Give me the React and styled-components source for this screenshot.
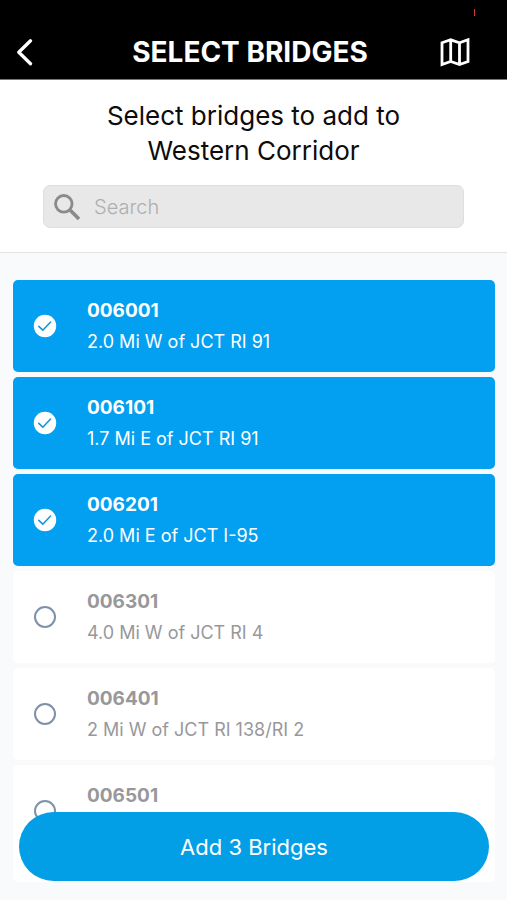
import React, { useState } from "react";
import styled, { createGlobalStyle } from "styled-components";

const BRIDGES = [
  { id: "006001", location: "2.0 Mi W of JCT RI 91" },
  { id: "006101", location: "1.7 Mi E of JCT RI 91" },
  { id: "006201", location: "2.0 Mi E of JCT I-95" },
  { id: "006301", location: "4.0 Mi W of JCT RI 4" },
  { id: "006401", location: "2 Mi W of JCT RI 138/RI 2" },
  { id: "006501", location: "" },
];

//styled-components
const GlobalStyle = createGlobalStyle`
  * {
    box-sizing: border-box;
  }
  body {
    margin: 0;
    background: #f8fafc;
    font-family: Inter, "Liberation Sans", sans-serif;
  }
`;
const Screen = styled.div`
  display: flex;
  flex-direction: column;
  height: 100vh;
`;
const Header = styled.header`
  background: #000;
  color: #fff;
  border-bottom: 1px solid #777;
`;
const StatusBar = styled.div`
  display: flex;
  justify-content: flex-end;
  align-items: flex-end;
  height: 16px;
  padding-right: 32px;
`;
const RecordingMark = styled.span`
  width: 1px;
  height: 7px;
  background: #d9363b;
`;
const NavBar = styled.div`
  display: flex;
  align-items: center;
  justify-content: space-between;
  height: 63px;
  padding: 8px 19px 0 12px;
`;
const Title = styled.h1`
  margin: 0;
  font-size: 28px;
  line-height: 32px;
  font-weight: 700;
`;
const IconButton = styled.button`
  display: flex;
  align-items: center;
  justify-content: flex-start;
  width: 48px;
  height: 40px;
  padding: 0;
  border: 0;
  background: none;
  color: inherit;
`;
const SearchPanel = styled.section`
  padding: 18px 43px 24px;
  background: #fff;
  border-bottom: 1px solid #e0e2e4;
`;
const Prompt = styled.h2`
  margin: 0 0 17px;
  text-align: center;
  color: #0c0c0c;
  font-size: 26px;
  line-height: 35px;
  font-weight: 400;
`;
const SearchBox = styled.label`
  display: flex;
  align-items: center;
  gap: 14px;
  height: 43px;
  padding: 0 10px;
  background: #e8e8e8;
  border: 1px solid #dedede;
  border-radius: 7px;
  color: #8a8a8d;
`;
const SearchInput = styled.input`
  flex: 1;
  min-width: 0;
  padding: 0;
  border: 0;
  outline: 0;
  background: none;
  color: #333;
  font-family: inherit;
  font-size: 20px;
  font-weight: 300;
  &::placeholder {
    color: #aeaeb0;
    opacity: 1;
  }
`;
const ListArea = styled.main`
  position: relative;
  display: flex;
  flex: 1;
  min-height: 0;
  margin-bottom: 18px;
  padding: 27px 12px 0 13px;
`;
const BridgeList = styled.ul`
  display: flex;
  flex: 1;
  flex-direction: column;
  gap: 5px;
  margin: 0;
  padding: 0;
  overflow: hidden;
  list-style: none;
`;
const BridgeItem = styled.li`
  display: flex;
  flex-shrink: 0;
  min-height: 92px;
  border-radius: 5px;
  background: ${(props) => (props.$selected ? "#039ff0" : "#fff")};
  color: ${(props) => (props.$selected ? "#fff" : "#98989b")};
  &:last-child {
    flex-grow: 1;
  }
`;
const BridgeLabel = styled.label`
  display: flex;
  flex: 1;
  align-items: flex-start;
  gap: 30px;
  padding: 15px 20px;
  cursor: pointer;
`;
const CheckWrap = styled.span`
  display: grid;
  width: 24px;
  height: 62px;
  place-items: center;
  & > * {
    grid-area: 1 / 1;
  }
`;
const CheckInput = styled.input`
  width: 24px;
  height: 24px;
  margin: 0;
  opacity: 0;
`;
const BridgeText = styled.span`
  display: flex;
  flex-direction: column;
`;
const BridgeId = styled.strong`
  font-size: 19px;
  line-height: 31px;
  font-weight: 700;
`;
const Location = styled.span`
  font-size: 18px;
  line-height: 31px;
`;
const AddButton = styled.button`
  position: absolute;
  right: 18px;
  bottom: 1px;
  left: 19px;
  height: 69px;
  border: 0;
  border-radius: 35px;
  background: #039fe6;
  color: #fff;
  font-family: inherit;
  font-size: 22px;
  font-weight: 400;
  cursor: pointer;
`;

const BackIcon = () => (
  <svg width="24" height="28" viewBox="0 0 24 28" fill="none">
    <path
      d="M18.500 2.800 6.800 14.300 18.500 25.800"
      stroke="currentColor"
      strokeWidth="3.300"
      strokeLinecap="round"
      strokeLinejoin="round"
    />
  </svg>
);

const MapIcon = () => (
  <svg width="30" height="30" viewBox="0 0 30 30" fill="none">
    <path
      d="M2 5.800 10.700 2.800 19.500 5.800 28 2.800V24.500L19.500 27.500 10.700 24.500 2 27.500ZM10.700 2.800V24.500M19.500 5.800V27.500"
      stroke="currentColor"
      strokeWidth="2.800"
    />
  </svg>
);

const SearchIcon = () => (
  <svg width="26" height="26" viewBox="0 0 26 26" fill="none">
    <circle cx="9.800" cy="9.800" r="8.300" stroke="currentColor" strokeWidth="2.800" />
    <path d="M15.500 15.500 25 25" stroke="currentColor" strokeWidth="3.600" />
  </svg>
);

const CheckMark = ({ checked }) => (
  <svg width="24" height="24" viewBox="0 0 24 24" fill="none" aria-hidden="true">
    {checked ? (
      <>
        <circle cx="12" cy="12" r="11.200" fill="#fff" />
        <path
          d="m5.800 12.400 4 3.800L17.600 8"
          stroke="#1697d8"
          strokeWidth="1.600"
          strokeLinecap="round"
          strokeLinejoin="round"
        />
      </>
    ) : (
      <circle cx="12" cy="12" r="10" stroke="#7f91a8" strokeWidth="2" />
    )}
  </svg>
);

const App = () => {
  const [search, setSearch] = useState("");
  const [selected, setSelected] = useState(["006001", "006101", "006201"]);

  const toggle = (id) => {
    setSelected((prev) =>
      prev.includes(id) ? prev.filter((s) => s !== id) : [...prev, id]
    );
  };

  const visible = BRIDGES.filter((b) =>
    (b.id + " " + b.location).toLowerCase().includes(search.toLowerCase())
  );

  return (
    <Screen>
      <GlobalStyle />
      <Header>
        <StatusBar>
          <RecordingMark />
        </StatusBar>
        <NavBar>
          <IconButton type="button" aria-label="Back">
            <BackIcon />
          </IconButton>
          <Title>SELECT BRIDGES</Title>
          <IconButton type="button" aria-label="Map">
            <MapIcon />
          </IconButton>
        </NavBar>
      </Header>

      <SearchPanel>
        <Prompt>
          Select bridges to add to
          <br />
          Western Corridor
        </Prompt>
        <SearchBox htmlFor="search">
          <SearchIcon />
          <SearchInput
            id="search"
            type="text"
            aria-label="Search"
            placeholder="Search"
            value={search}
            onChange={(e) => setSearch(e.target.value)}
          />
        </SearchBox>
      </SearchPanel>

      <ListArea>
        <BridgeList>
          {visible.map((b) => (
            <BridgeItem key={b.id} $selected={selected.includes(b.id)}>
              <BridgeLabel htmlFor={"bridge_" + b.id}>
                <CheckWrap>
                  <CheckInput
                    type="checkbox"
                    id={"bridge_" + b.id}
                    checked={selected.includes(b.id)}
                    onChange={() => toggle(b.id)}
                  />
                  <CheckMark checked={selected.includes(b.id)} />
                </CheckWrap>
                <BridgeText>
                  <BridgeId>{b.id}</BridgeId>
                  {b.location && <Location>{b.location}</Location>}
                </BridgeText>
              </BridgeLabel>
            </BridgeItem>
          ))}
        </BridgeList>
        <AddButton type="button">Add {selected.length} Bridges</AddButton>
      </ListArea>
    </Screen>
  );
};

export default App;
